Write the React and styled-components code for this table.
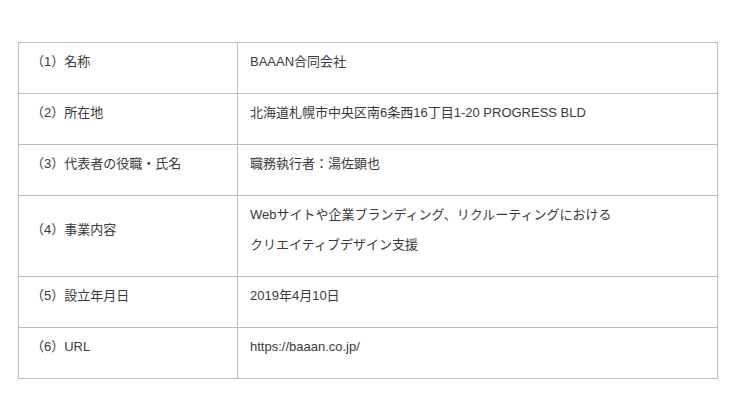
import React from 'react';
import styled, { createGlobalStyle } from 'styled-components';

const GlobalStyle = createGlobalStyle`
  body {
    margin: 0;
    background: #fff;
    font-family: "Liberation Sans", "Noto Sans CJK JP", sans-serif;
    color: #3a3a3a;
  }
`;

const rows = [
  { label: '（1）名称', value: ['BAAAN合同会社'] },
  { label: '（2）所在地', value: ['北海道札幌市中央区南6条西16丁目1-20 PROGRESS BLD'] },
  { label: '（3）代表者の役職・氏名', value: ['職務執行者：湯佐顕也'] },
  {
    label: '（4）事業内容',
    value: ['Webサイトや企業ブランディング、リクルーティングにおける', 'クリエイティブデザイン支援'],
  },
  { label: '（5）設立年月日', value: ['2019年4月10日'] },
  { label: '（6）URL', value: ['https://baaan.co.jp/'] },
];

export const CompanyTable = () => {
  return (
    <Wrap>
      <Table>
        <tbody>
          {rows.map((r) => (
            <tr key={r.label}>
              <Label>{r.label}</Label>
              <Value>
                {r.value.map((line) => (
                  <Line key={line}>{line}</Line>
                ))}
              </Value>
            </tr>
          ))}
        </tbody>
      </Table>
    </Wrap>
  );
};

const App = () => (
  <>
    <GlobalStyle />
    <CompanyTable />
  </>
);

export default App;

const Wrap = styled.div`
  padding: 42px 0 0 18px;
`;

const Table = styled.table`
  width: 700px;
  border-collapse: collapse;
  table-layout: fixed;
  font-size: 13px;
  text-spacing-trim: space-all;
`;

const Cell = styled.td`
  border: 1px solid #bdbdbd;
  padding: 4px 12px 16px;
  line-height: 30px;
  vertical-align: middle;
`;

const Label = styled(Cell)`
  width: 219px;
  box-sizing: border-box;
`;

const Value = styled(Cell)``;

const Line = styled.div`
  white-space: nowrap;
`;
